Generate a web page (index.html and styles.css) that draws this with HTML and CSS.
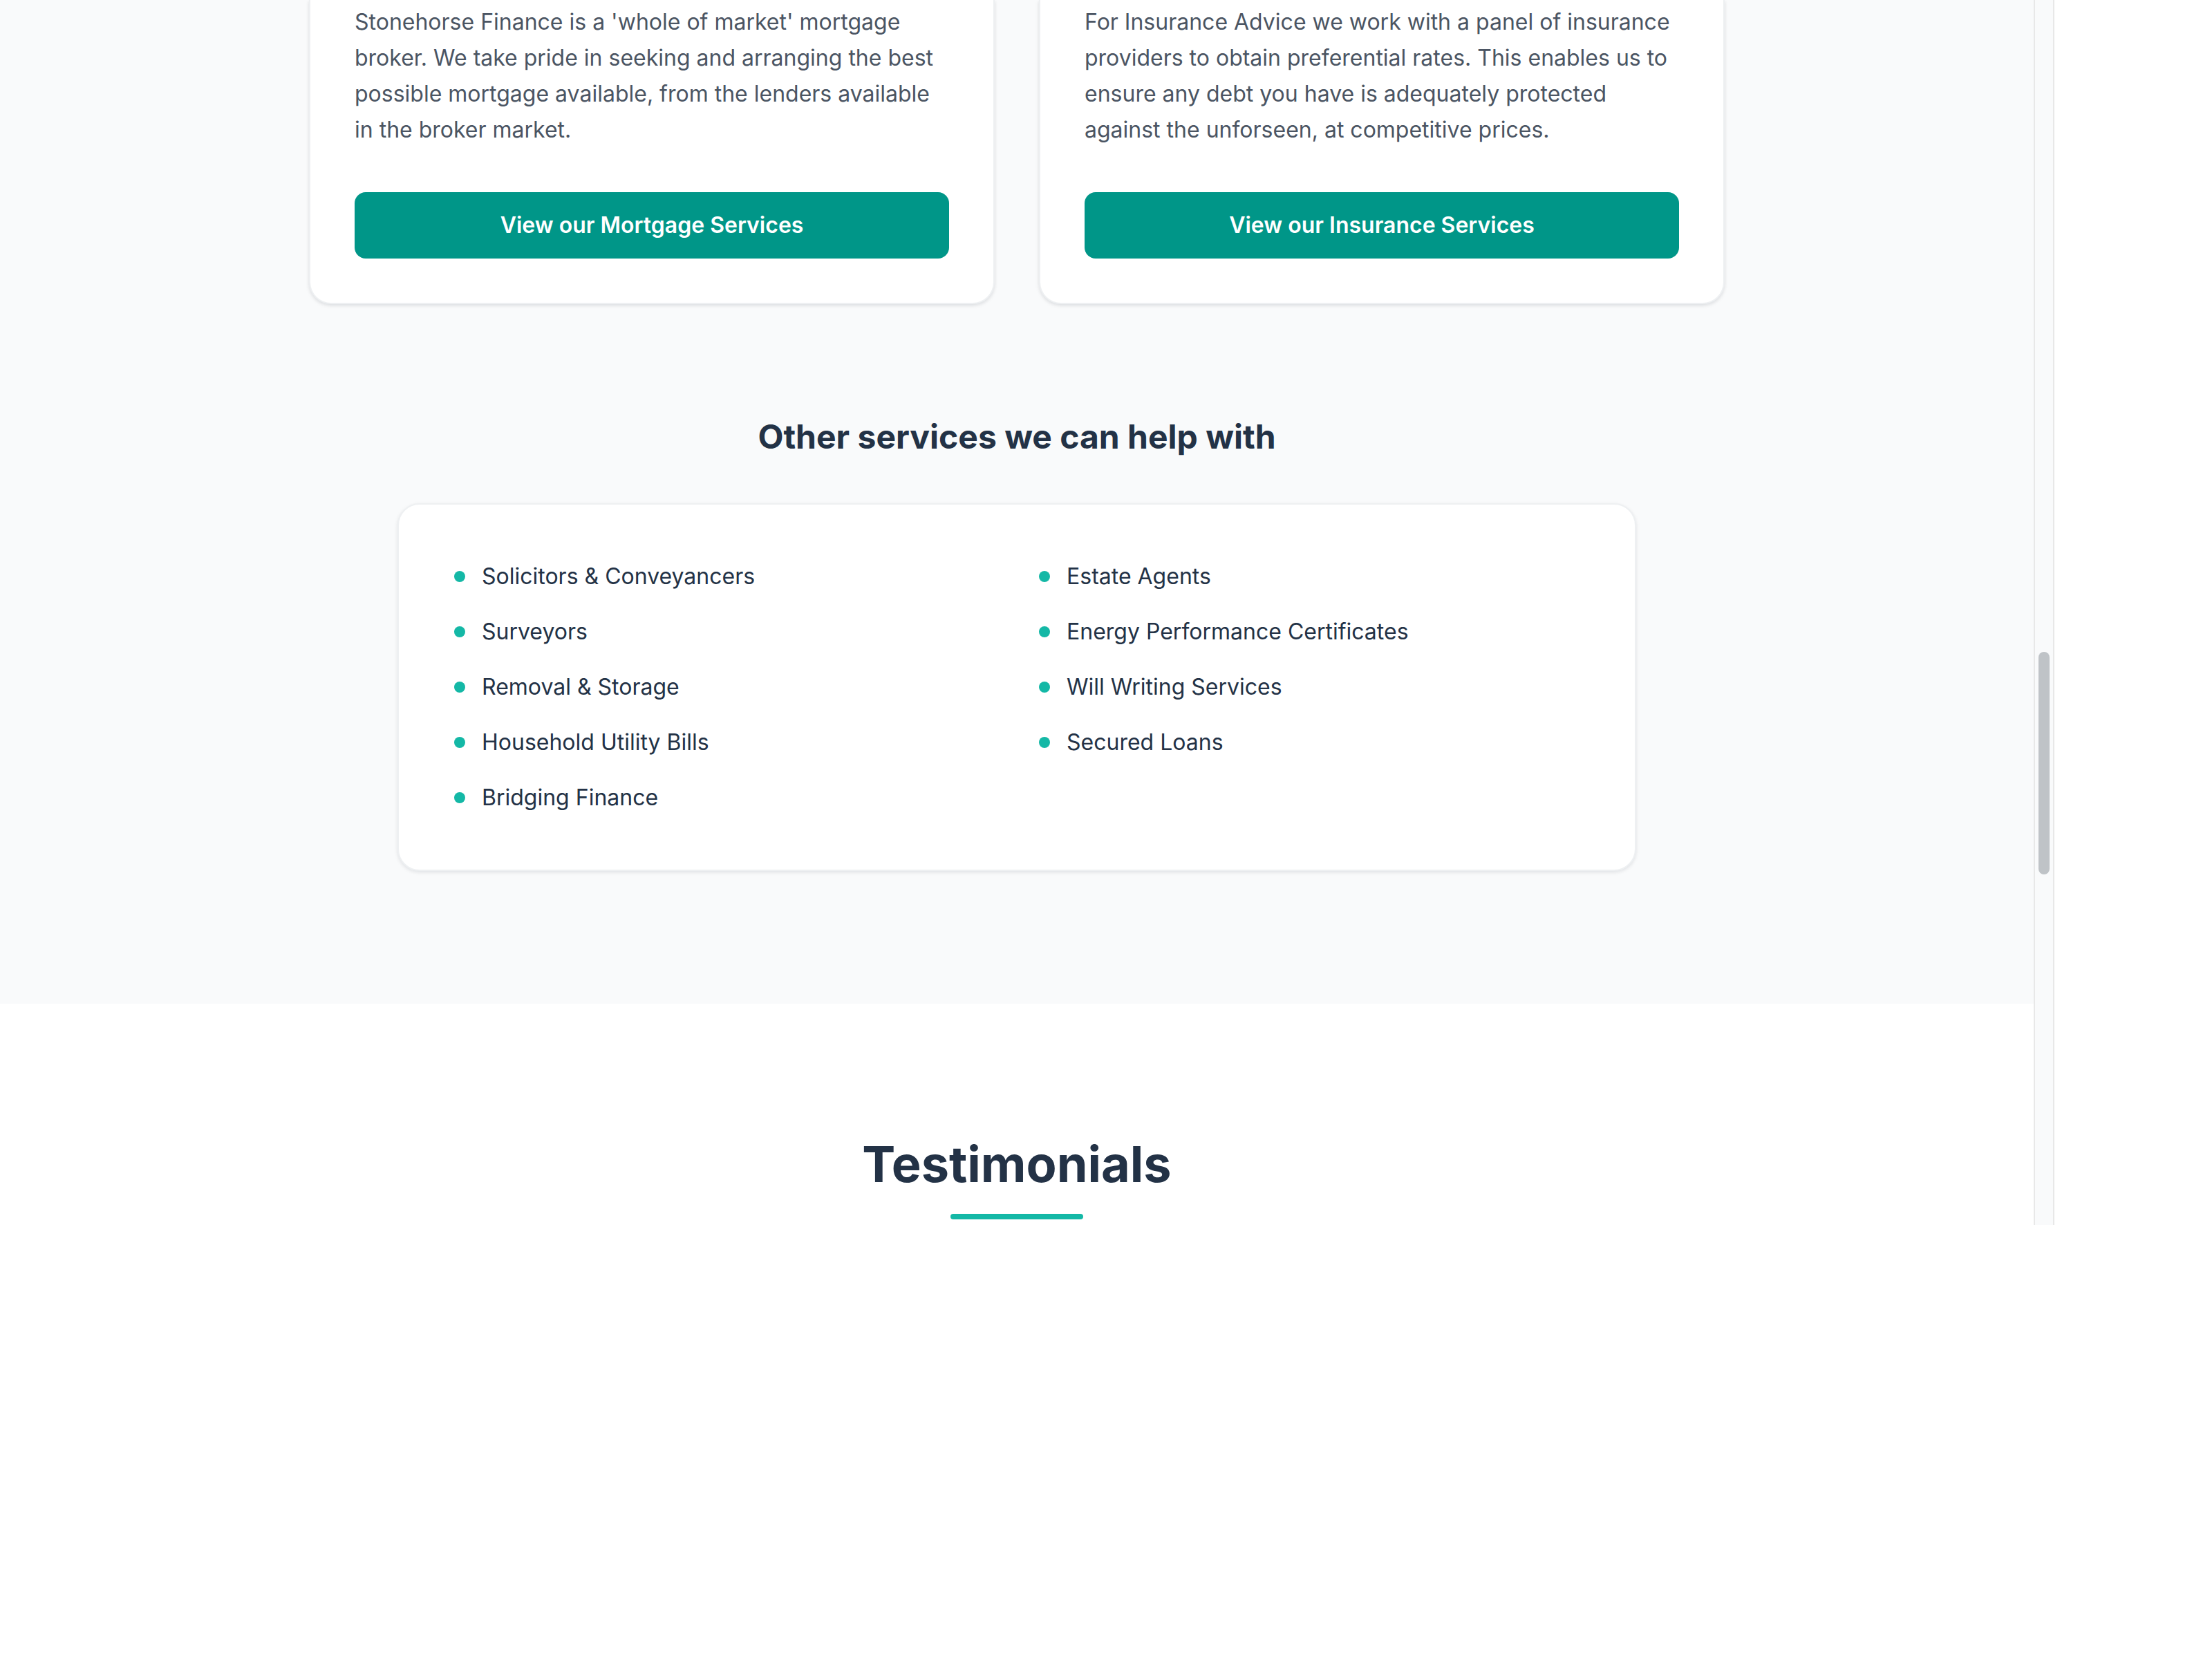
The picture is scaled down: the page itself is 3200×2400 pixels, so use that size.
FILE: index.html
```html
<!DOCTYPE html>
<html lang="en">
<head>
<meta charset="utf-8">
<title>Stonehorse Finance – Services</title>
<link rel="stylesheet" href="styles.css">
</head>
<body>
<div class="screen">
  <div class="viewport">
    <main class="page">
      <section class="services">
        <div class="cards">
          <article class="card">
            <p class="card-text">Stonehorse Finance is a 'whole of market' mortgage broker. We take pride in seeking and arranging the best possible mortgage available, from the lenders available in the broker market.</p>
            <a class="btn" href="#">View our Mortgage Services</a>
          </article>
          <article class="card">
            <p class="card-text">For Insurance Advice we work with a panel of insurance providers to obtain preferential rates. This enables us to ensure any debt you have is adequately protected against the unforseen, at competitive prices.</p>
            <a class="btn" href="#">View our Insurance Services</a>
          </article>
        </div>

        <h2 class="other-title">Other services we can help with</h2>
        <div class="other-box">
          <ul class="other-list">
            <li><span class="dot"></span>Solicitors &amp; Conveyancers</li>
            <li><span class="dot"></span>Surveyors</li>
            <li><span class="dot"></span>Removal &amp; Storage</li>
            <li><span class="dot"></span>Household Utility Bills</li>
            <li><span class="dot"></span>Bridging Finance</li>
          </ul>
          <ul class="other-list">
            <li><span class="dot"></span>Estate Agents</li>
            <li><span class="dot"></span>Energy Performance Certificates</li>
            <li><span class="dot"></span>Will Writing Services</li>
            <li><span class="dot"></span>Secured Loans</li>
          </ul>
        </div>
      </section>

      <section class="testimonials">
        <h2 class="testi-title">Testimonials</h2>
        <div class="testi-rule"></div>
      </section>
    </main>
    <div class="scrollbar"><div class="thumb"></div></div>
  </div>
</div>
</body>
</html>
```

FILE: styles.css
```css
html, body {
  margin: 0;
  padding: 0;
  background: #ffffff;
}

.screen {
  zoom: 2;
  font-family: Inter, "Noto Sans", "Liberation Sans", sans-serif;
  -webkit-font-smoothing: antialiased;
}

.viewport {
  display: flex;
  width: 1486px;
  height: 886px;
  overflow: hidden;
}

.page {
  width: 1471px;
  flex: none;
  overflow: hidden;
}

/* ---------- services (gray) section ---------- */
.services {
  background: #f9fafb;
  padding-bottom: 96px;
}

.cards {
  width: 1024px;
  margin: 0 auto;
  display: grid;
  grid-template-columns: 1fr 1fr;
  gap: 32px;
}

.card {
  background: #ffffff;
  border: 1px solid #eef0f2;
  border-top: none;
  border-radius: 0 0 16px 16px;
  box-shadow: 0 1px 3px rgba(16, 24, 40, 0.08), 0 1px 2px rgba(16, 24, 40, 0.05);
  padding: 3px 32px 32px;
  display: flex;
  flex-direction: column;
}

.card-text {
  margin: 0 0 32px;
  font-size: 16px;
  line-height: 26px;
  color: #4b5563;
}

.btn {
  display: block;
  background: #009688;
  color: #ffffff;
  text-decoration: none;
  text-align: center;
  font-weight: 600;
  font-size: 16px;
  line-height: 24px;
  padding: 12px 16px;
  border-radius: 8px;
}

.other-title {
  margin: 80px 0 32px;
  text-align: center;
  font-size: 24px;
  line-height: 32px;
  font-weight: 700;
  color: #233246;
}

.other-box {
  width: 896px;
  box-sizing: border-box;
  margin: 0 auto;
  background: #ffffff;
  border: 1px solid #eef0f2;
  border-radius: 16px;
  box-shadow: 0 1px 3px rgba(16, 24, 40, 0.07), 0 1px 2px rgba(16, 24, 40, 0.04);
  padding: 40px;
  display: grid;
  grid-template-columns: 1fr 1fr;
  gap: 32px;
}

.other-list {
  list-style: none;
  margin: 0;
  padding: 0;
  display: flex;
  flex-direction: column;
  gap: 16px;
}

.other-list li {
  display: flex;
  align-items: center;
  font-size: 16px;
  line-height: 24px;
  color: #233246;
}

.dot {
  width: 8px;
  height: 8px;
  border-radius: 50%;
  background: #14b8a6;
  margin-right: 12px;
  flex: none;
}

/* ---------- testimonials (white) section ---------- */
.testimonials {
  background: #ffffff;
  padding-top: 96px;
  display: flex;
  flex-direction: column;
  align-items: center;
}

.testi-title {
  margin: 0 0 16px;
  font-size: 36px;
  line-height: 40px;
  font-weight: 700;
  color: #233246;
}

.testi-rule {
  width: 96px;
  height: 4px;
  border-radius: 9999px;
  background: #14b8a6;
}

/* ---------- fake browser scrollbar ---------- */
.scrollbar {
  width: 15px;
  flex: none;
  box-sizing: border-box;
  background: #f9fafb;
  border-left: 1px solid #e8e8e8;
  border-right: 1px solid #e8e8e8;
  padding-top: 471.5px;
}

.thumb {
  width: 8px;
  height: 161px;
  margin-left: 2.5px;
  border-radius: 4px;
  background: #bfc3c7;
}
```
